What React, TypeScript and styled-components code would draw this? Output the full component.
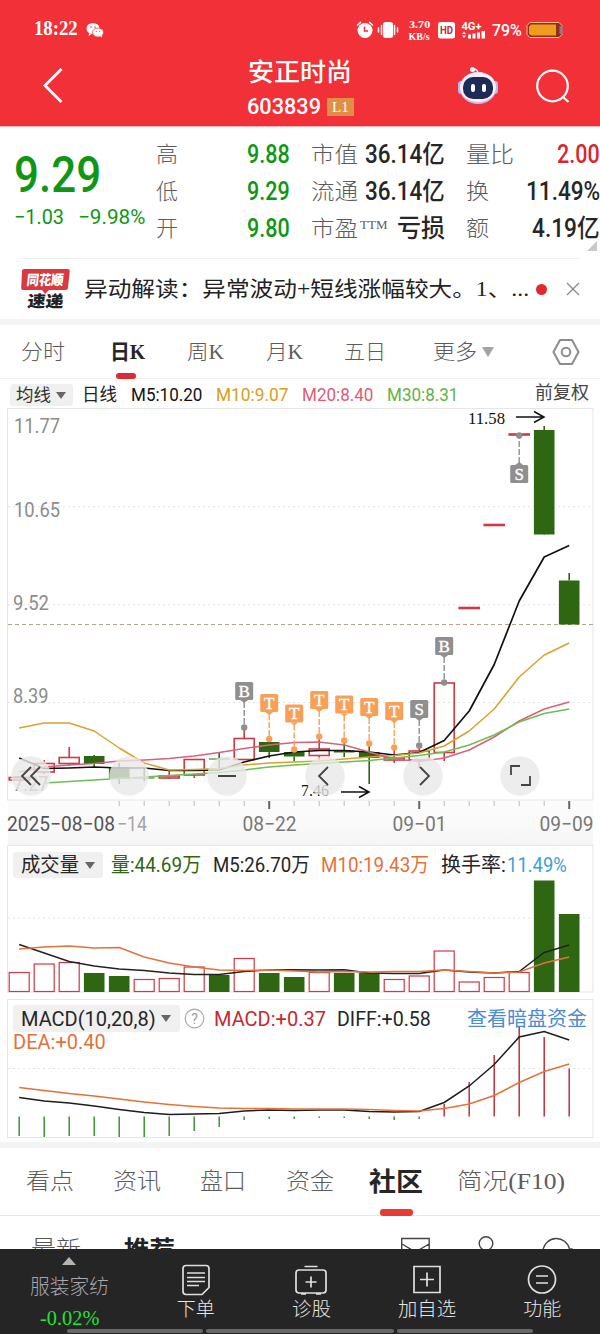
import React, { useLayoutEffect, useRef, useState } from "react";
import styled, { createGlobalStyle, css } from "styled-components";

const DIN = `Roboto, "Noto Sans CJK SC", sans-serif`;
const KAI = `"Liberation Serif", "Noto Sans CJK SC", serif`;

const GlobalStyle = createGlobalStyle`
  * { box-sizing: border-box; }
  body { margin: 0; background: #fff; font-family: ${DIN}; }
  svg { display: block; flex: none; }
`;

/* ---------- text fitted to a given width ---------- */

const FitBox = styled.span<{
  $w: number; $size: number; $ml?: number; $color?: string; $weight?: number; $kai?: boolean; $up?: number;
}>`
  display: block;
  flex: none;
  width: ${(p) => p.$w}px;
  margin-left: ${(p) => p.$ml ?? 0}px;
  margin-bottom: ${(p) => (p.$up ?? 0) * 2}px;
  height: ${(p) => Math.round(p.$size * 1.2)}px;
  line-height: ${(p) => Math.round(p.$size * 1.2)}px;
  font-size: ${(p) => p.$size}px;
  font-weight: ${(p) => p.$weight ?? 400};
  font-family: ${(p) => (p.$kai ? KAI : DIN)};
  color: ${(p) => p.$color ?? "inherit"};
  white-space: nowrap;
`;
const FitInner = styled.span`
  display: inline-block;
  line-height: inherit;
  vertical-align: top;
  transform-origin: 0 50%;
`;

type FitProps = {
  w: number; size: number; ml?: number; color?: string; weight?: number; kai?: boolean; up?: number;
  children: React.ReactNode;
};
function Fit({ w, size, ml, color, weight, kai, up, children }: FitProps) {
  const ref = useRef<HTMLSpanElement>(null);
  const [k, setK] = useState(1);
  useLayoutEffect(() => {
    if (ref.current) setK(w / ref.current.offsetWidth);
  }, [w, children]);
  return (
    <FitBox $w={w} $size={size} $ml={ml} $color={color} $weight={weight} $kai={kai} $up={up}>
      <FitInner ref={ref} style={{ transform: `scaleX(${k})` }}>{children}</FitInner>
    </FitBox>
  );
}

/* ---------- page frame ---------- */

const Page = styled.div`
  width: 600px;
  height: 1334px;
  overflow: hidden;
  display: flex;
  flex-direction: column;
  background: #fff;
`;
const Row = css`
  display: flex;
  align-items: center;
  flex: none;
`;
const Header = styled.header`
  height: 127px;
  flex: none;
  color: #fff;
  background: #f23037;
  border-bottom: 1px solid #f6b3b5;
`;
const StatusBar = styled.div`
  ${Row};
  height: 60px;
  padding: 0 0 0 34px;
`;
const StatusRight = styled.div`
  ${Row};
  margin-left: 252px;
`;
const Speed = styled.div`
  width: 22px;
  margin-left: 8px;
  display: flex;
  flex-direction: column;
  align-items: center;
`;
const NavBar = styled.div`
  ${Row};
  align-items: flex-start;
  height: 66px;
`;
const BackIcon = styled.svg`margin: 7px 0 0 42px;`;
const TitleBlock = styled.div`
  width: 106px;
  margin-left: 184px;
  margin-top: -2px;
`;
const CodeLine = styled.div`
  ${Row};
  margin: 6px 0 0 -1px;
`;
const Level = styled.span`
  ${Row};
  justify-content: center;
  width: 27px;
  height: 18px;
  margin-left: 6px;
  background: #dd9046;
`;
const RobotIcon = styled.svg`margin: 6px 0 0 103px;`;
const SearchIcon = styled.svg`margin: 8px 0 0 36px;`;

/* ---------- quote ---------- */

const Quote = styled.section`
  display: flex;
  flex: none;
  height: 131px;
  padding-top: 9px;
`;
const PriceBlock = styled.div`
  flex: none;
  width: 142px;
  padding: 9px 0 0 14px;
`;
const ChangeLine = styled.div`
  ${Row};
`;
const StatColumn = styled.div<{ $w: number; $ml: number }>`
  flex: none;
  width: ${(p) => p.$w}px;
  margin-left: ${(p) => p.$ml}px;
`;
const Stat = styled.div`
  ${Row};
  height: 37px;
  justify-content: space-between;
`;
const StatLabel = styled.div`
  display: flex;
  align-items: center;
`;
const MoreCorner = styled.div`
  width: 0;
  height: 0;
  margin: -6px 3px 0 auto;
  border-left: 10px solid transparent;
  border-bottom: 10px solid #c9c9c9;
`;

/* ---------- news ---------- */

const News = styled.section`
  ${Row};
  height: 61px;
  margin: 0 20px 0 18px;
  padding-left: 2px;
  border-top: 1px solid #f1f1f1;
`;
const Dot = styled.i`
  width: 11px;
  height: 11px;
  margin-left: 7px;
  border-radius: 50%;
  background: #e8262a;
`;
const CloseIcon = styled.svg`margin-left: 19px;`;
const Band = styled.div<{ $h: number }>`
  flex: none;
  height: ${(p) => p.$h}px;
  background: #f4f4f5;
`;

/* ---------- tabs ---------- */

const PeriodTabs = styled.nav`
  display: flex;
  flex: none;
  height: 54px;
  border-bottom: 1px solid #f1f1f1;
`;
const Tab = styled.div<{ $ml: number; $h: number }>`
  height: ${(p) => p.$h}px;
  margin-left: ${(p) => p.$ml}px;
  display: flex;
  flex-direction: column;
  align-items: center;
  justify-content: center;
`;
const TabWithBar = styled(Tab)<{ $barW: number; $barH: number; $barColor: string; $shift?: number }>`
  position: relative;
  &::after {
    content: "";
    position: absolute;
    bottom: 0;
    left: calc(50% - ${(p) => p.$barW / 2 + (p.$shift ?? 0)}px);
    width: ${(p) => p.$barW}px;
    height: ${(p) => p.$barH}px;
    border-radius: 3px;
    background: ${(p) => p.$barColor};
  }
`;
const Caret = styled.i<{ $ml: number; $w?: number; $c?: string }>`
  flex: none;
  width: 0;
  height: 0;
  margin-left: ${(p) => p.$ml}px;
  border-left: ${(p) => (p.$w ?? 11) / 2}px solid transparent;
  border-right: ${(p) => (p.$w ?? 11) / 2}px solid transparent;
  border-top: ${(p) => ((p.$w ?? 11) > 12 ? 10 : 7.5)}px solid ${(p) => p.$c ?? "#666"};
`;
const MoreTab = styled.div`
  ${Row};
  height: 54px;
  margin-left: 47px;
`;
const HexIcon = styled.svg`margin: 13px 0 0 58px;`;

/* ---------- chart panels ---------- */

const Legend = styled.div`
  ${Row};
  height: 29px;
  padding: 3px 0 0 10px;
`;
const Chip = styled.div<{ $w: number; $h: number; $pl: number }>`
  ${Row};
  width: ${(p) => p.$w}px;
  height: ${(p) => p.$h}px;
  padding-left: ${(p) => p.$pl}px;
  border-radius: 3px;
  background: #f0f0f0;
`;
const Panel = styled.section<{ $h: number }>`
  display: grid;
  flex: none;
  height: ${(p) => p.$h}px;
  & > * { grid-area: 1 / 1; }
`;
const PanelHead = styled.div`
  z-index: 1;
  align-self: start;
`;
const HeadLine = styled.div<{ $h: number; $pt: number }>`
  ${Row};
  height: ${(p) => p.$h}px;
  padding: ${(p) => p.$pt}px 0 0 13px;
`;
const HelpIcon = styled.svg`margin-left: 4px;`;

/* ---------- lower tabs and bottom bar ---------- */

const SectionTabs = styled.nav`
  display: flex;
  flex: none;
  height: 68px;
  border-bottom: 1px solid #e6e6e6;
`;
const SubRow = styled.div`
  display: flex;
  flex: none;
  height: 33px;
  padding: 20px 0 0 31px;
  overflow: hidden;
`;
const SubIcon = styled.svg<{ $ml: number }>`margin-left: ${(p) => p.$ml}px;`;
const BottomBar = styled.footer`
  display: flex;
  flex: none;
  flex-wrap: wrap;
  height: 85px;
  background: #252525;
  color: #e6e6e6;
`;
const Sector = styled.div`
  display: flex;
  flex-direction: column;
  align-items: center;
  width: 138px;
  height: 79px;
  padding-top: 8px;
`;
const UpCaret = styled.i`
  border-left: 7px solid transparent;
  border-right: 7px solid transparent;
  border-bottom: 8px solid #b5b5b5;
  margin-bottom: 10px;
`;
const SectorValue = styled.div`margin-top: 7px;`;
const Action = styled.div`
  display: flex;
  flex-direction: column;
  align-items: center;
  width: 115.5px;
  height: 79px;
  padding-top: 14px;
  gap: 2px;
`;
const HomeStrip = styled.div`
  display: flex;
  gap: 3px;
  width: 100%;
  height: 6px;
  padding: 1px 67px 1px;
`;
const Strip = styled.i<{ $grow: number }>`
  flex: ${(p) => p.$grow};
  height: 4px;
  border-radius: 2px;
  background: #686868;
`;

/* ---------- chart data ---------- */

const RED = "#cf3944";
const GREEN = "#2f6612";
const cx = (i: number) => 19.2 + i * 25;
const pts = (ys: number[], from = 0) => ys.map((y, i) => `${cx(i + from)},${y}`).join(" ");

type Candle = [up: boolean, top: number, bottom: number, high: number, low: number];
const candles: Candle[] = [
  [true, 777.5, 780, 777, 780], [true, 763.5, 772, 760, 774], [true, 757.5, 763.5, 747, 766],
  [false, 756, 764, 755, 767], [false, 767, 779, 763, 784], [false, 777.5, 778.5, 768, 781],
  [true, 776, 778, 771, 779], [true, 759.5, 775, 759, 778], [false, 758.5, 759.5, 752, 768],
  [true, 738.5, 759.5, 728, 759], [false, 742, 752, 740, 758], [false, 752, 756.5, 750, 761],
  [true, 749, 755.5, 738, 760], [false, 750.5, 752.5, 742, 757], [false, 752, 758, 744, 784],
  [true, 758, 760, 748, 763], [true, 751, 760, 746, 768], [true, 683, 752.5, 683, 761],
  [true, 607.5, 608.5, 607, 609], [true, 524.5, 525.5, 524, 526], [true, 434, 435, 433, 436],
  [false, 430, 534.5, 426, 534], [false, 580.5, 624.5, 573, 624],
];
const ma5 = [758, 768.5, 768, 767, 768, 768, 770.5, 770.5, 770, 762, 756, 752, 750.5, 750.5, 752, 755, 752.5, 740.5, 711, 664.5, 601, 557, 545.5];
const ma10 = [728, 723, 723, 731, 748, 763, 770, 769.5, 768.5, 765, 763, 762, 761, 759, 757, 755.5, 753, 746, 731, 709, 677, 655, 643];
const ma20 = [772, 767, 765, 763.5, 761, 760, 758.5, 756, 752.5, 748.5, 745, 742.5, 742, 745, 752, 759, 761.5, 758, 750, 737, 721, 709, 702];
const ma30 = [783, 781.5, 780, 778.5, 777, 775.5, 774, 772.5, 770, 767, 765, 763.5, 762, 760.5, 758, 755.5, 752, 745, 735, 722, 713.5, 709];
const marks: [number, string, number, number][] = [
  [9, "B", 691, 727.5], [10, "T", 703, 739], [11, "T", 713.5, 749.5], [12, "T", 700, 736.5],
  [13, "T", 704.5, 740.5], [14, "T", 707, 743.5], [15, "T", 711, 747.5], [16, "S", 709, 745.5],
  [17, "B", 646, 682.5], [20, "S", 474, 435.5],
];

const volumes: [boolean, number][] = [
  [true, 972.5], [true, 964], [true, 962.5], [false, 973], [false, 976], [true, 979.5], [true, 978.5],
  [true, 967], [false, 975], [true, 958.5], [false, 973], [false, 977], [true, 972.5], [false, 973],
  [false, 973], [true, 979.5], [true, 976], [true, 951], [true, 982], [true, 977.5], [true, 972.5],
  [false, 880.5], [false, 914],
];
const vol5 = [944.5, 953, 961.5, 966, 969, 970.5, 973, 974.5, 974.5, 971.5, 970, 969.7, 970, 969.7, 973, 973.5, 973.5, 970, 972, 973, 971.5, 952.5, 945];
const vol10 = [949, 947, 946, 948, 947.5, 957, 963, 967, 970, 970.5, 970, 971, 972, 971.5, 972, 971.5, 971.5, 970, 971.5, 973, 972, 963, 957];

const macdBars = [1136, 1137, 1136, 1136, 1137, 1137, 1136, 1131, 1127, 1120, 1119, 1119, 1118, 1118, 1119, 1120, 1119, 1104, 1082, 1055, 1026, 1037, 1068.5];
const diff = [1097.5, 1101, 1103, 1106, 1109.5, 1112.5, 1114.5, 1114, 1113.5, 1111, 1110, 1110.5, 1110, 1110, 1111.5, 1112, 1111.5, 1102.5, 1086, 1064.5, 1037, 1031.5, 1040];
const dea = [1087.5, 1090.5, 1093.5, 1096, 1099, 1102, 1104.5, 1106.5, 1108, 1108.5, 1108.5, 1109, 1109, 1109, 1109.5, 1110.5, 1111, 1108.5, 1104, 1095.5, 1082.5, 1071.5, 1064];

const Grid = ({ y }: { y: number }) => (
  <line x1="8" x2="593" y1={y} y2={y} stroke="#e2e2e2" strokeDasharray="2 3" />
);
const Frame = ({ y, h }: { y: number; h: number }) => (
  <rect x="7.5" y={y} width="585.5" height={h} fill="#fff" stroke="#e6e6e6" />
);
const SvgLabel = ({ x, y, w, size = 20, fill = "#8c8c8c", serif, children }: {
  x: number; y: number; w: number; size?: number; fill?: string; serif?: boolean; children: string;
}) => (
  <text x={x} y={y} textLength={w} lengthAdjust="spacingAndGlyphs" fontSize={size} fill={fill}
    fontFamily={serif ? KAI : DIN}>{children}</text>
);

function PriceChart() {
  return (
    <svg width="600" height="437" viewBox="0 408 600 437">
      <defs>
        <linearGradient id="axis" x1="0" y1="0" x2="0" y2="1">
          <stop offset="0" stopColor="#fdfdfd" /><stop offset="1" stopColor="#f6f6f6" />
        </linearGradient>
      </defs>
      <rect x="8" y="800" width="585" height="45" fill="url(#axis)" />
      <Frame y={408.5} h={391.5} />
      {[506.7, 604.8, 702.5].map((y) => <Grid key={y} y={y} />)}
      <line x1="8" x2="593" y1="624.5" y2="624.5" stroke="#b5a588" strokeDasharray="4 3" />
      <SvgLabel x={14} y={433} w={46}>11.77</SvgLabel>
      <SvgLabel x={14} y={517} w={46}>10.65</SvgLabel>
      <SvgLabel x={13} y={609.5} w={36}>9.52</SvgLabel>
      <SvgLabel x={13} y={703} w={35.5}>8.39</SvgLabel>
      <SvgLabel x={13} y={791} w={35.5}>7.27</SvgLabel>
      {candles.map(([up, t, b, hi, lo], i) => {
        const x = cx(i);
        const c = up ? RED : GREEN;
        return (
          <g key={i} stroke={c} strokeWidth="1.6">
            <line x1={x} x2={x} y1={hi} y2={t} />
            <line x1={x} x2={x} y1={b} y2={lo} />
            {up ? <rect x={x - 10} y={t} width="20" height={b - t} fill="none" />
              : <rect x={x - 10.3} y={t} width="20.6" height={b - t} fill={c} stroke="none" />}
          </g>
        );
      })}
      <g fill="none" strokeWidth="1.5" strokeLinejoin="round">
        <polyline points={pts(ma5)} stroke="#111" strokeWidth="1.7" />
        <polyline points={pts(ma10)} stroke="#d8a32a" />
        <polyline points={pts(ma20)} stroke="#dc607c" />
        <polyline points={pts(ma30, 1)} stroke="#6cbf50" />
      </g>
      {marks.map(([i, s, y, dot]) => {
        const x = cx(i);
        const c = s === "T" ? "#f9a058" : "#8f8f8f";
        const dir = dot > y ? 1 : -1;
        return (
          <g key={i}>
            <line x1={x} x2={x} y1={y + dir * 11} y2={dot} stroke={c} strokeWidth="1.4" strokeDasharray="6 2" />
            <circle cx={x} cy={dot} r="3.2" fill={c} />
            <path d={`M${x - 4} ${y + dir * 9}h8l-4 ${dir * 3}z`} fill={c} />
            <rect x={x - 9} y={y - 9} width="18" height="18" rx="1.5" fill={c} />
            <text x={x} y={y + 5.5} textAnchor="middle" fontSize="17" fill="#fff" stroke="#fff" strokeWidth=".4" fontFamily={KAI}>{s}</text>
          </g>
        );
      })}
      <g fill="none" stroke="#111" strokeWidth="1.5">
        <path d="M516 417h27M534 411.5l10 5.5-10 5.5" />
        <path d="M341 792h27M359 786.5l10 5.5-10 5.5" />
      </g>
      <SvgLabel x={468} y={424} w={37} size={16} fill="#111" serif>11.58</SvgLabel>
      <SvgLabel x={301} y={795.5} w={28} size={16} fill="#111" serif>7.46</SvgLabel>
      {[31, 129, 227, 325, 423, 520].map((x) => (
        <circle key={x} cx={x} cy="776" r="19.8" fill="#e9e9e9" fillOpacity="0.8" />
      ))}
      <g fill="none" stroke="#444" strokeWidth="1.8">
        <path d="M31 767l-9 9 9 9M40 767l-9 9 9 9M218 776h18M328 767l-9 9 9 9M420 767l9 9-9 9" />
        <path d="M511 775v-9h9M530 776v9h-9" />
      </g>
      {Array.from({ length: 19 }, (_, k) => k + 4).map((i) => {
        const major = i === 10 || i === 16 || i === 22;
        return <line key={i} x1={cx(i)} x2={cx(i)} y1="801" y2={major ? 809 : 806}
          stroke={major ? "#666" : "#bbb"} strokeWidth={major ? 2 : 1} />;
      })}
      <SvgLabel x={7} y={830.5} w={108} fill="#555">2025−08−08</SvgLabel>
      <SvgLabel x={117} y={830.5} w={30} fill="#a5a5a5">−14</SvgLabel>
      <SvgLabel x={242.5} y={830.5} w={54} fill="#777">08−22</SvgLabel>
      <SvgLabel x={392.5} y={830.5} w={54} fill="#777">09−01</SvgLabel>
      <SvgLabel x={539.5} y={830.5} w={54} fill="#777">09−09</SvgLabel>
    </svg>
  );
}

function VolumeChart() {
  return (
    <svg width="600" height="154" viewBox="0 845 600 154">
      <Frame y={845.5} h={146.5} />
      <Grid y={918} />
      {volumes.map(([up, t], i) => up
        ? <rect key={i} x={cx(i) - 10} y={t} width="20" height={991.5 - t} fill="#fff" stroke={RED} strokeWidth="1.2" />
        : <rect key={i} x={cx(i) - 10.3} y={t} width="20.6" height={992 - t} fill={GREEN} />)}
      <g fill="none" strokeWidth="1.4">
        <polyline points={pts(vol5)} stroke="#222" />
        <polyline points={pts(vol10)} stroke="#e5713a" />
      </g>
    </svg>
  );
}

function MacdChart() {
  return (
    <svg width="600" height="143" viewBox="0 999 600 143">
      <Frame y={999.5} h={138} />
      <Grid y={1068.5} />
      {macdBars.map((y, i) => (
        <line key={i} x1={cx(i)} x2={cx(i)} y1="1116.5" y2={y} strokeWidth="1.5" stroke={i > 16 ? "#c5303c" : "#3f9038"} />
      ))}
      <g fill="none" strokeWidth="1.5">
        <polyline points={pts(diff)} stroke="#1c1c1c" />
        <polyline points={pts(dea)} stroke="#e5713a" />
      </g>
    </svg>
  );
}

function StatusIcons() {
  return (
    <svg width="44" height="18" viewBox="0 0 44 18">
      <g fill="none" stroke="#fff" strokeWidth="1.5" strokeLinecap="round">
        <path d="M1.5 4l3-2.6M13.5 1.4l3 2.6" />
        <path d="M22.500 7v4M25.500 4.500v9M38.500 4.500v9M41.500 7v4" />
      </g>
      <circle cx="9" cy="9.5" r="7.5" fill="#fff" />
      <path d="M8.5 5.5v4.500h3.500" fill="none" stroke="#f23037" strokeWidth="1.5" />
      <rect x="27" y="1" width="10" height="16" rx="2.5" fill="#fff" />
    </svg>
  );
}

function Robot() {
  return (
    <RobotIcon width="42" height="40" viewBox="0 0 42 40">
      <path d="M21 8q0-5-5-5" fill="none" stroke="#eee" strokeWidth="1.5" />
      <circle cx="15.500" cy="3.500" r="2.500" fill="#fff" />
      <rect x="1" y="15" width="6" height="13" rx="3" fill="#b9b4ef" />
      <rect x="35" y="15" width="6" height="13" rx="3" fill="#b9b4ef" />
      <ellipse cx="21" cy="22" rx="18.500" ry="16" fill="#c9b8ee" />
      <ellipse cx="21" cy="21.200" rx="18" ry="15" fill="#f6f0fc" />
      <rect x="6" y="11" width="30" height="22" rx="10" fill="#1e2b56" />
      <rect x="14" y="18" width="4" height="8" rx="2" fill="#fff" />
      <rect x="25" y="18" width="4" height="8" rx="2" fill="#fff" />
    </RobotIcon>
  );
}

function NewsLogo() {
  return (
    <svg width="50" height="42" viewBox="0 0 50 42">
      <path d="M4 1h44q2 0 1.700 2l-1.700 17q-.2 2-2.200 2H29l-4 4-3-4H3q-2 0-1.800-2L2 3q.2-2 2-2z" fill="#d93a42" />
      <g transform="skewX(-6)" fontFamily={DIN} fontWeight="900">
        <text x="8" y="17" fontSize="14" fill="#fff" textLength="37" lengthAdjust="spacingAndGlyphs">同花顺</text>
        <text x="11" y="39" fontSize="16" fill="#222" textLength="36" lengthAdjust="spacingAndGlyphs">速递</text>
      </g>
    </svg>
  );
}

const UP = "#0e9713";
const INK = "#262626";
const GREY = "#5c5c5c";

export default function App() {
  return (
    <Page>
      <GlobalStyle />
      <Header>
        <StatusBar>
          <Fit w={44} size={20} weight={700} kai up={2}>18:22</Fit>
          <svg width="26" height="16" viewBox="0 0 26 16">
            <ellipse cx="15" cy="6.5" rx="6.5" ry="5.5" fill="#fff" />
            <ellipse cx="20" cy="10.5" rx="5.5" ry="4.5" fill="#fff" stroke="#f23037" strokeWidth=".7" />
            <path d="M11.5 11l-1 3 3-2zM22 14l2 1.500v-3z" fill="#fff" />
            <g fill="#f23037">
              <circle cx="13" cy="5" r=".8" /><circle cx="17" cy="5" r=".8" />
              <circle cx="18.300" cy="9.300" r=".6" /><circle cx="21.700" cy="9.300" r=".6" />
            </g>
          </svg>
          <StatusRight>
            <StatusIcons />
            <Speed>
              <Fit w={21} size={11} kai weight={700}>3.70</Fit>
              <Fit w={21} size={10} kai weight={700}>KB/s</Fit>
            </Speed>
            <svg width="57" height="18" viewBox="0 0 57 18">
              <rect x="8" y="1" width="17" height="16.500" rx="2.500" fill="#fff" />
              <text x="10" y="13.200" fontSize="11" fontWeight="700" fontFamily={DIN} fill="#c32a33" textLength="13" lengthAdjust="spacingAndGlyphs">HD</text>
              <text x="31.500" y="8.500" fontSize="10.500" fontWeight="700" fontFamily={DIN} fill="#fff" textLength="20" lengthAdjust="spacingAndGlyphs">4G+</text>
              <path d="M32 13l2-2.500 2 2.500zM32 14.500l2 2.500 2-2.500zM38 13.500h3v4h-3zM42.500 12.500h3v5h-3zM47 11.500h3v6h-3zM51.500 10h3.500v7.500h-3.500z" fill="#fff" />
            </svg>
            <Fit w={30} size={17} ml={5} weight={500}>79%</Fit>
            <svg width="43" height="18" viewBox="0 0 43 18">
              <path d="M8 1.500h29l3 3v9l-3 3H8l-3-3v-9z" fill="#8d3020" stroke="#f7c08e" />
              <path d="M9 3.500h25v11H9l-2-2v-7z" fill="#f29a1d" />
              <path d="M37.500 5h3.500v8h-3.500z" fill="#b06e73" />
            </svg>
          </StatusRight>
        </StatusBar>
        <NavBar>
          <BackIcon width="22" height="37" viewBox="0 0 22 37">
            <path d="M19.500 2L3 18.500 19.500 35" fill="none" stroke="#fff" strokeWidth="2.800" />
          </BackIcon>
          <TitleBlock>
            <Fit w={104} size={25} weight={500}>安正时尚</Fit>
            <CodeLine>
              <Fit w={74} size={22} weight={500}>603839</Fit>
              <Level><Fit w={17} size={15} kai>L1</Fit></Level>
            </CodeLine>
          </TitleBlock>
          <Robot />
          <SearchIcon width="36" height="37" viewBox="0 0 36 37">
            <circle cx="17.500" cy="18" r="15.300" fill="none" stroke="#fff" strokeWidth="2.200" />
            <path d="M27.500 28.500l6 5.500" stroke="#fff" strokeWidth="2.200" />
          </SearchIcon>
        </NavBar>
      </Header>

      <Quote>
        <PriceBlock>
          <Fit w={87} size={50} weight={500} color={UP}>9.29</Fit>
          <ChangeLine>
            <Fit w={50} size={21} weight={400} color={UP}>−1.03</Fit>
            <Fit w={67} size={21} ml={14} weight={400} color={UP}>−9.98%</Fit>
          </ChangeLine>
        </PriceBlock>
        <StatColumn $w={134} $ml={14}>
          {[["高", "9.88"], ["低", "9.29"], ["开", "9.80"]].map(([l, v]) => (
            <Stat key={l}>
              <Fit w={22} size={22} weight={300} kai color={GREY}>{l}</Fit>
              <Fit w={43} size={25} weight={500} color={UP}>{v}</Fit>
            </Stat>
          ))}
        </StatColumn>
        <StatColumn $w={134} $ml={21}>
          <Stat><Fit w={47} size={22} weight={300} kai color={GREY}>市值</Fit><Fit w={80} size={25} weight={500} color={INK}>36.14亿</Fit></Stat>
          <Stat><Fit w={47} size={22} weight={300} kai color={GREY}>流通</Fit><Fit w={80} size={25} weight={500} color={INK}>36.14亿</Fit></Stat>
          <Stat>
            <StatLabel>
              <Fit w={47} size={22} weight={300} kai color={GREY}>市盈</Fit>
              <Fit w={27} size={13} ml={2} up={4} kai color={GREY}>TTM</Fit>
            </StatLabel>
            <Fit w={48} size={25} weight={500} color={INK}>亏损</Fit>
          </Stat>
        </StatColumn>
        <StatColumn $w={134} $ml={21}>
          <Stat><Fit w={48} size={22} weight={300} kai color={GREY}>量比</Fit><Fit w={43} size={25} weight={500} color="#d8262d">2.00</Fit></Stat>
          <Stat><Fit w={23} size={22} weight={300} kai color={GREY}>换</Fit><Fit w={74} size={25} weight={500} color={INK}>11.49%</Fit></Stat>
          <Stat><Fit w={23} size={22} weight={300} kai color={GREY}>额</Fit><Fit w={68} size={25} weight={500} color={INK}>4.19亿</Fit></Stat>
          <MoreCorner />
        </StatColumn>
      </Quote>

      <News>
        <NewsLogo />
        <Fit w={445} size={21} ml={14} kai color="#222">异动解读：异常波动+短线涨幅较大。1、...</Fit>
        <Dot />
        <CloseIcon width="14" height="14" viewBox="0 0 14 14">
          <path d="M1 1l12 12M13 1L1 13" stroke="#8a8a8a" strokeWidth="1.3" />
        </CloseIcon>
      </News>
      <Band $h={6} />

      <PeriodTabs>
        <Tab $ml={21} $h={54}><Fit w={44} size={21} weight={300} kai color={GREY}>分时</Fit></Tab>
        <TabWithBar $ml={45} $h={54} $barW={20} $barH={6} $barColor="#dc2c35" $shift={2}>
          <Fit w={35} size={21} weight={700} kai color={INK}>日K</Fit>
        </TabWithBar>
        <Tab $ml={42} $h={54}><Fit w={37} size={21} weight={300} kai color={GREY}>周K</Fit></Tab>
        <Tab $ml={42} $h={54}><Fit w={37} size={21} weight={300} kai color={GREY}>月K</Fit></Tab>
        <Tab $ml={41} $h={54}><Fit w={42} size={21} weight={300} kai color={GREY}>五日</Fit></Tab>
        <MoreTab>
          <Fit w={44} size={21} weight={300} kai color={GREY}>更多</Fit>
          <Caret $ml={5} $w={13} $c="#a3a3a3" />
        </MoreTab>
        <HexIcon width="28" height="28" viewBox="0 0 28 28">
          <g fill="none" stroke="#8c8c8c" strokeWidth="2">
            <path d="M8 2h12l6.500 12-6.500 12H8L1.500 14z" strokeLinejoin="round" />
            <circle cx="14" cy="14" r="4.300" />
          </g>
        </HexIcon>
      </PeriodTabs>

      <Legend>
        <Chip $w={63} $h={22} $pl={6}>
          <Fit w={35} size={17} color="#333">均线</Fit>
          <Caret $ml={5} />
        </Chip>
        <Fit w={35} size={18} ml={9} color="#222">日线</Fit>
        <Fit w={71} size={18} ml={14} color="#111">M5:10.20</Fit>
        <Fit w={72} size={18} ml={14} color="#d5a021">M10:9.07</Fit>
        <Fit w={71} size={18} ml={14} color="#dd5c74">M20:8.40</Fit>
        <Fit w={71} size={18} ml={14} color="#62b244">M30:8.31</Fit>
        <Fit w={54} size={18} ml={77} up={2} kai color="#444">前复权</Fit>
      </Legend>
      <PriceChart />

      <Panel $h={154}>
        <VolumeChart />
        <PanelHead>
          <HeadLine $h={34} $pt={6}>
            <Chip $w={90} $h={26} $pl={8}>
              <Fit w={58} size={20} color={INK}>成交量</Fit>
              <Caret $ml={6} />
            </Chip>
            <Fit w={90} size={20} ml={8} color={GREEN}>量:44.69万</Fit>
            <Fit w={97} size={20} ml={12} color={INK}>M5:26.70万</Fit>
            <Fit w={108} size={20} ml={11} color="#e5713a">M10:19.43万</Fit>
            <Fit w={65} size={20} ml={12} color={INK}>换手率:</Fit>
            <Fit w={60} size={20} ml={1} color="#3da0d8">11.49%</Fit>
          </HeadLine>
        </PanelHead>
      </Panel>

      <Panel $h={143}>
        <MacdChart />
        <PanelHead>
          <HeadLine $h={33} $pt={6}>
            <Chip $w={167} $h={27} $pl={8}>
              <Fit w={135} size={20} color={INK}>MACD(10,20,8)</Fit>
              <Caret $ml={5} />
            </Chip>
            <HelpIcon width="21" height="21" viewBox="0 0 21 21">
              <circle cx="10.500" cy="10.500" r="9.300" fill="none" stroke="#a8a8a8" strokeWidth="1.200" />
              <text x="10.500" y="15.500" textAnchor="middle" fontSize="14" fill="#999" fontFamily={DIN}>?</text>
            </HelpIcon>
            <Fit w={112} size={20} ml={9} color="#ca2733">MACD:+0.37</Fit>
            <Fit w={94} size={20} ml={11} color={INK}>DIFF:+0.58</Fit>
            <Fit w={120} size={20} ml={36} color="#4b8bd5">查看暗盘资金</Fit>
          </HeadLine>
          <HeadLine $h={19} $pt={0}>
            <Fit w={93} size={20} color="#e5713a">DEA:+0.40</Fit>
          </HeadLine>
        </PanelHead>
      </Panel>
      <Band $h={6} />

      <SectionTabs>
        <Tab $ml={26} $h={68}><Fit w={48} size={23} weight={300} kai color={GREY}>看点</Fit></Tab>
        <Tab $ml={39} $h={68}><Fit w={48} size={23} weight={300} kai color={GREY}>资讯</Fit></Tab>
        <Tab $ml={39} $h={68}><Fit w={46} size={23} weight={300} kai color={GREY}>盘口</Fit></Tab>
        <Tab $ml={40} $h={68}><Fit w={48} size={23} weight={300} kai color={GREY}>资金</Fit></Tab>
        <TabWithBar $ml={35} $h={68} $barW={33} $barH={7} $barColor="#e93b33">
          <Fit w={54} size={26} weight={700} kai color={INK}>社区</Fit>
        </TabWithBar>
        <Tab $ml={34} $h={68}><Fit w={108} size={23} weight={300} kai color={GREY}>简况(F10)</Fit></Tab>
      </SectionTabs>
      <SubRow>
        <Fit w={50} size={24} weight={300} kai color="#555">最新</Fit>
        <Fit w={51} size={24} ml={43} weight={700} kai color="#222">推荐</Fit>
        <SubIcon $ml={226} width="29" height="24" viewBox="0 0 29 24">
          <path d="M.7 2.500h27.500v20H.7zM1 8l13.500 8L28 8" fill="none" stroke="#444" strokeWidth="1.400" />
        </SubIcon>
        <SubIcon $ml={43} width="26" height="24" viewBox="0 0 26 24">
          <circle cx="13" cy="7.500" r="6.800" fill="none" stroke="#444" strokeWidth="1.400" />
        </SubIcon>
        <SubIcon $ml={43} width="32" height="30" viewBox="0 0 32 30">
          <path d="M1 14a13.500 13.500 0 0 1 26.500-1h3" fill="none" stroke="#444" strokeWidth="1.400" />
        </SubIcon>
      </SubRow>

      <BottomBar>
        <Sector>
          <UpCaret />
          <Fit w={79} size={20} weight={300} kai color="#a7a7ad">服装家纺</Fit>
          <SectorValue><Fit w={59} size={20} kai color="#22e234">-0.02%</Fit></SectorValue>
        </Sector>
        <Action>
          <svg width="32" height="33" viewBox="0 0 32 33">
            <path d="M6 2.500h20q3 0 3 3v19l-7 7H6q-3 0-3-3v-23q0-3 3-3zM7 10h18M7 14.500h18M7 18.500h18M7 22.500h12" fill="none" stroke="#e0e0e0" strokeWidth="1.700" />
          </svg>
          <Fit w={38} size={19} weight={300} kai>下单</Fit>
        </Action>
        <Action>
          <svg width="34" height="33" viewBox="0 0 34 33">
            <path d="M5 7h24q3 0 3 3v17q0 3-3 3H5q-3 0-3-3V10q0-3 3-3zM10.500 3.500h13M17 13.500v11M11.500 19h11M7 31h5M22 31h5" fill="none" stroke="#e0e0e0" strokeWidth="1.700" />
          </svg>
          <Fit w={39} size={19} weight={300} kai>诊股</Fit>
        </Action>
        <Action>
          <svg width="32" height="33" viewBox="0 0 32 33">
            <path d="M3 3.500h26v26H3zM16 9.500v14M9 16.500h14" fill="none" stroke="#e0e0e0" strokeWidth="1.700" />
          </svg>
          <Fit w={58} size={19} weight={300} kai>加自选</Fit>
        </Action>
        <Action>
          <svg width="32" height="33" viewBox="0 0 32 33">
            <circle cx="16" cy="16.500" r="13.500" fill="none" stroke="#e0e0e0" strokeWidth="1.700" />
            <path d="M10 13h12M10 20h12" stroke="#e0e0e0" strokeWidth="1.700" />
          </svg>
          <Fit w={38} size={19} weight={300} kai>功能</Fit>
        </Action>
        <HomeStrip><Strip $grow={136} /><Strip $grow={188} /><Strip $grow={136} /></HomeStrip>
      </BottomBar>
    </Page>
  );
}
